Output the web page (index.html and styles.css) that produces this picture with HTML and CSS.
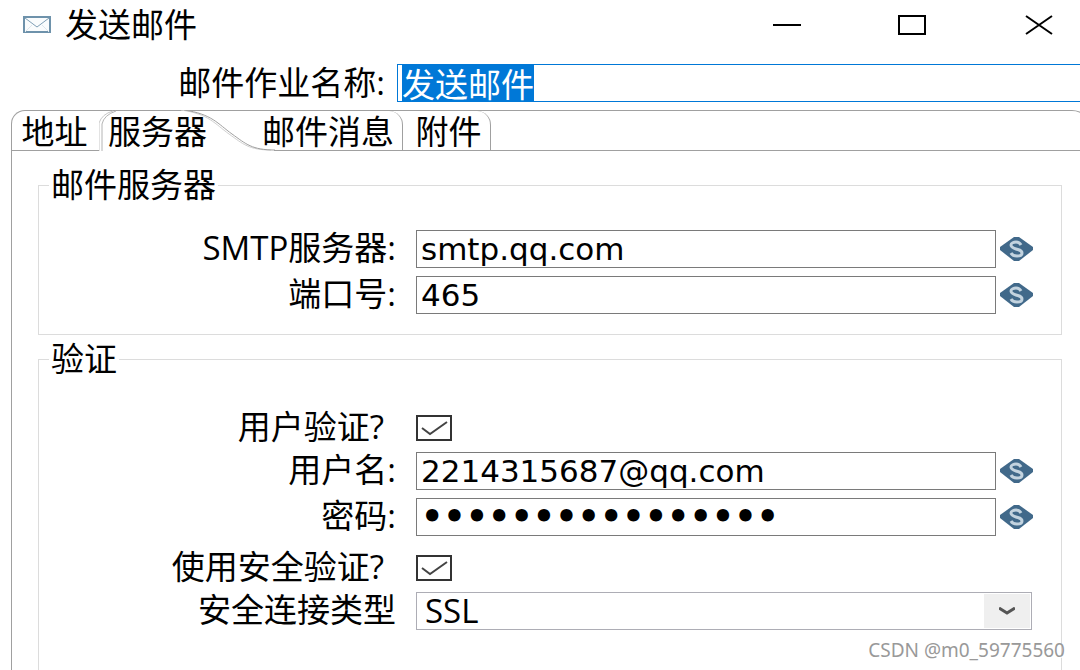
FILE: index.html
```html
<!DOCTYPE html>
<html lang="zh-CN">

<head>
    <meta charset="UTF-8">
    <meta name="viewport" content="width=device-width, initial-scale=1.0">
    <title>发送邮件</title>
    <link rel="stylesheet" href="styles.css">
</head>

<body>
    <svg width="0" height="0" class="defs">
        <symbol id="var" viewBox="0 0 33 24">
            <path fill="#41698a" d="M14 0h5L33 10v3L19 24h-5L0 13v-3z" />
            <path fill="none" stroke="#c3d3df" stroke-width="3" d="M21 8c-1-2-3-3-5-3s-5 1-5 3 2 3 5 4 6 1 6 4-3 3-5 3-5-1-6-3" />
        </symbol>
    </svg>

    <header class="titlebar">
        <svg class="mail" viewBox="0 0 28 18">
            <rect x="1" y="1" width="26" height="15" fill="#fafcfd" stroke="#6e92ab" stroke-width="2" />
            <path d="M2 2l12 9L26 2" fill="none" stroke="#7f9fb6" />
            <path d="M2 16l7-7M26 16l-7-7" fill="none" stroke="#dde6ec" />
        </svg>
        <h1>发送邮件</h1>
        <div class="controls">
            <button type="button" aria-label="最小化"><svg viewBox="0 0 28 20"><path d="M0 10h28" /></svg></button>
            <button type="button" aria-label="最大化"><svg viewBox="0 0 28 20"><path d="M1 1h26v18H1z" /></svg></button>
            <button type="button" aria-label="关闭"><svg viewBox="0 0 28 20"><path d="M1 1l26 18M27 1L1 19" /></svg></button>
        </div>
    </header>

    <form>
        <div class="job">
            <label for="jobname">邮件作业名称:</label>
            <input type="text" id="jobname" value="发送邮件">
        </div>

        <nav class="tabs">
            <button type="button" class="tab first">地址</button>
            <button type="button" class="tab active">
                <svg viewBox="0 0 176 41">
                    <path d="M3 41V14Q5 5 17 1" stroke="#b4b4b4" />
                    <path d="M0 41V13Q3 4 14 1" stroke="#c8c8c8" />
                    <path d="M82 0C110 4 116 14 130 24S150 40 172 40" stroke="#d0d0d0" />
                    <path d="M85 0C113 4 119 14 133 24S153 40 176 40" stroke="#a0a0a0" />
                </svg>
                <span>服务器</span>
            </button>
            <button type="button" class="tab message">邮件消息</button>
            <button type="button" class="tab attach">附件</button>
            <div class="rest"></div>
        </nav>

        <div class="panel">
            <fieldset>
                <legend>邮件服务器</legend>
                <div class="rows">
                    <label for="smtp">SMTP服务器:</label>
                    <input type="text" id="smtp" value="smtp.qq.com">
                    <svg class="var"><use href="#var" /></svg>

                    <label for="port">端口号:</label>
                    <input type="text" id="port" value="465">
                    <svg class="var"><use href="#var" /></svg>
                </div>
            </fieldset>

            <fieldset class="auth">
                <legend>验证</legend>
                <div class="rows">
                    <label for="useauth" class="ask">用户验证?</label>
                    <div class="check">
                        <input type="checkbox" id="useauth" checked>
                        <svg viewBox="0 0 36 26"><path d="M6 13l8 6L31 7" /></svg>
                    </div>

                    <label for="user">用户名:</label>
                    <input type="text" id="user" value="2214315687@qq.com">
                    <svg class="var"><use href="#var" /></svg>

                    <label for="pwd">密码:</label>
                    <input type="password" id="pwd" value="abcdefgh12345678">
                    <svg class="var"><use href="#var" /></svg>

                    <label for="usessl" class="ask second">使用安全验证?</label>
                    <div class="check second">
                        <input type="checkbox" id="usessl" checked>
                        <svg viewBox="0 0 36 26"><path d="M6 13l8 6L31 7" /></svg>
                    </div>

                    <label for="type">安全连接类型</label>
                    <div class="select">
                        <select id="type">
                            <option>SSL</option>
                            <option>TLS</option>
                        </select>
                        <span class="arrow"><svg viewBox="0 0 16 9"><path d="M0 1l8 5 8-5" /></svg></span>
                    </div>
                </div>
            </fieldset>
        </div>
    </form>

    <div class="watermark">CSDN @m0_59775560</div>

    <script>
        var oName = document.querySelector("#jobname");
        oName.focus();
        oName.select();
    </script>
</body>

</html>
```

FILE: styles.css
```css
* {
    margin: 0;
    padding: 0;
    box-sizing: border-box;
}

body {
    position: relative;
    height: 100vh;
    overflow: hidden;
    background-color: #fff;
    color: #000;
    font-family: "Open Sans", "Noto Sans CJK SC", sans-serif;
    font-size: 33px;
    line-height: 34px;
}

form {
    display: flex;
    flex-direction: column;
    height: calc(100vh - 64px);
}

button,
input,
select {
    font: inherit;
    color: inherit;
    border: none;
    outline: none;
    background: none;
    border-radius: 0;
    appearance: none;
}

svg {
    display: block;
}

.defs {
    position: absolute;
}

/* 标题栏 */
.titlebar {
    display: flex;
    align-items: center;
    height: 50px;
    margin-bottom: 14px;
    padding-left: 23px;
}

.mail {
    width: 28px;
    height: 18px;
    margin-right: 14px;
}

h1 {
    font-size: 33px;
    font-weight: 400;
}

.controls {
    display: flex;
    margin-left: auto;
}

.controls button {
    display: flex;
    align-items: center;
    justify-content: center;
    width: 125px;
    height: 50px;
}

.controls button:last-child {
    width: 82px;
    margin-left: 24px;
}

.controls svg {
    width: 28px;
    height: 20px;
    fill: none;
    stroke: #000;
    stroke-width: 2;
}

/* 作业名称 */
.job {
    display: flex;
    align-items: center;
    height: 38px;
    margin-bottom: 8px;
}

.job label {
    width: 397px;
    padding-right: 12px;
    line-height: 32px;
    text-align: right;
}

.job input {
    flex: 1;
    min-width: 0;
    height: 38px;
    padding-left: 4px;
    border: 1px solid #0078d7;
    border-right: none;
    line-height: 32px;
}

.job input::selection {
    background-color: #0078d7;
    color: #fff;
}

/* 选项卡 */
.tabs {
    display: flex;
    height: 41px;
    margin: 0 -12px 0 11px;
    border: 1px solid #a0a0a0;
    border-bottom: none;
    border-radius: 14px 20px 0 0;
}

.tab {
    height: 40px;
    padding-top: 2px;
    border-bottom: 1px solid #a0a0a0;
    white-space: nowrap;
}

.first {
    width: 87px;
    padding-right: 2px;
}

.active {
    position: relative;
    width: 150px;
    padding-left: 9px;
    border-bottom: none;
    text-align: left;
}

.active svg {
    position: absolute;
    left: 0;
    top: -1px;
    width: 176px;
    height: 41px;
    fill: none;
}

.active span {
    position: relative;
}

.message {
    width: 154px;
    padding-right: 8px;
    text-align: right;
    border-right: 1px solid #a0a0a0;
    border-top-right-radius: 14px;
    border-bottom: none;
    background: linear-gradient(#a0a0a0, #a0a0a0) right bottom / 128px 1px no-repeat;
}

.attach {
    width: 88px;
    padding-left: 4px;
    border-right: 1px solid #a0a0a0;
    border-top-right-radius: 14px;
}

.rest {
    flex: 1;
    border-bottom: 1px solid #a0a0a0;
}

/* 内容 */
.panel {
    flex: 1;
    display: flex;
    flex-direction: column;
    margin-left: 11px;
    padding: 17px 18px 0 26px;
    border-left: 1px solid #a0a0a0;
}

fieldset {
    min-width: 0;
    margin-bottom: 7px;
    padding: 28px 29px 20px 0;
    border: 1px solid #dcdcdc;
}

legend {
    margin-left: 10px;
    padding: 0 2px;
}

.auth {
    flex: 1;
    margin-bottom: 0;
    padding-top: 36px;
    padding-bottom: 0;
    border-bottom: none;
}

.rows {
    display: grid;
    grid-template-columns: 373px 1fr 32px;
    align-items: center;
    gap: 8px 4px;
}

.rows label {
    height: 32px;
    padding-right: 16px;
    line-height: 30px;
    text-align: right;
    white-space: nowrap;
}

.rows label.ask {
    padding-right: 28px;
}

.rows input[type=text],
.rows input[type=password] {
    width: 100%;
    min-width: 0;
    height: 38px;
    padding: 0 4px;
    border: 1px solid #7a7a7a;
    font-family: "DejaVu Sans", sans-serif;
    font-size: 31px;
}

.rows input[type=password] {
    font-size: 35px;
    font-weight: 700;
}

.var {
    width: 33px;
    height: 24px;
}

.check {
    position: relative;
    grid-column: 2 / 4;
    display: flex;
    align-items: center;
    height: 32px;
}

.check input {
    width: 36px;
    height: 26px;
    border: 2px solid #333;
}

.check svg {
    position: absolute;
    left: 0;
    top: 3px;
    width: 36px;
    height: 26px;
    fill: none;
    stroke: #444;
    stroke-width: 2;
    pointer-events: none;
    visibility: hidden;
}

.check input:checked + svg {
    visibility: visible;
}

.second {
    margin-top: 8px;
}

.select {
    position: relative;
    grid-column: 2 / 4;
}

.select select {
    display: block;
    width: 100%;
    height: 38px;
    padding: 0 8px;
    border: 1px solid #adadb5;
    line-height: 34px;
}

.arrow {
    position: absolute;
    top: 2px;
    right: 2px;
    display: flex;
    align-items: center;
    justify-content: center;
    width: 46px;
    height: 34px;
    background-color: #efefef;
    pointer-events: none;
}

.arrow svg {
    width: 16px;
    height: 9px;
    fill: none;
    stroke: #555;
    stroke-width: 3;
}

.watermark {
    position: absolute;
    right: 15px;
    bottom: 3px;
    color: #999;
    font-family: "Noto Sans", sans-serif;
    font-size: 19px;
    text-shadow: 1px 1px 0 #fff;
}
```
